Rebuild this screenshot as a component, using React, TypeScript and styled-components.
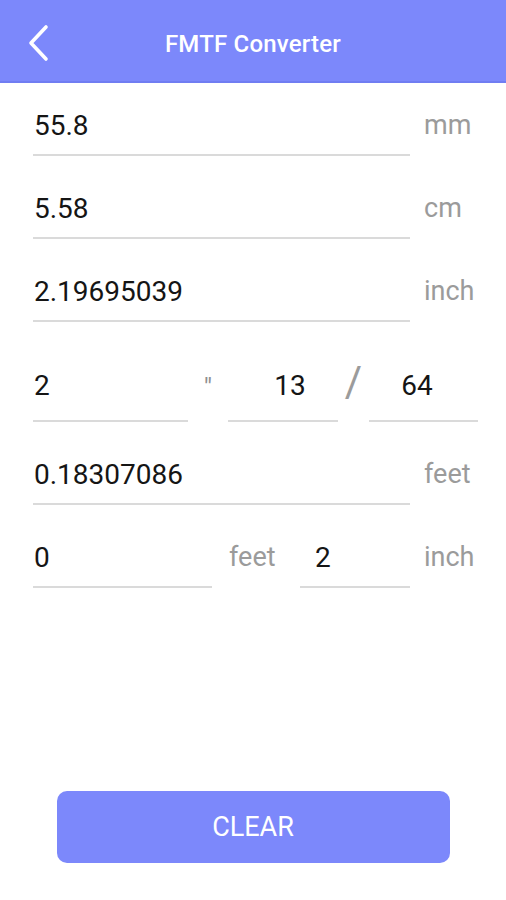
import styled, { createGlobalStyle } from 'styled-components';

const GlobalStyle = createGlobalStyle`
  html, body {
    margin: 0;
    padding: 0;
    background: #ffffff;
  }
  * {
    box-sizing: border-box;
  }
`;

const App = () => {
    return (
        <Page>
            <GlobalStyle />
            <TopBar>
                <BackButton aria-label="back">
                    <svg width="24" height="40" viewBox="0 0 24 40">
                        <path d="M19 4 L4 20 L19 36" fill="none" stroke="#ffffff" strokeWidth="3.6" strokeLinecap="round" strokeLinejoin="round" />
                    </svg>
                </BackButton>
                <Title>FMTF Converter</Title>
            </TopBar>

            <Form>
                <Row>
                    <Field readOnly value="55.8" />
                    <Unit>mm</Unit>
                </Row>
                <Row>
                    <Field readOnly value="5.58" />
                    <Unit>cm</Unit>
                </Row>
                <Row>
                    <Field readOnly value="2.19695039" />
                    <Unit>inch</Unit>
                </Row>
                <Row $tall>
                    <Field readOnly value="2" $width={155} $tall />
                    <Sep $width={40}><Quote>″</Quote></Sep>
                    <Field readOnly value="13" $width={110} $tall $center $padLeft={14} />
                    <Sep $width={31}><Slash>/</Slash></Sep>
                    <Field readOnly value="64" $width={109} $tall $center $padRight={14} />
                </Row>
                <Row>
                    <Field readOnly value="0.18307086" />
                    <Unit>feet</Unit>
                </Row>
                <Row>
                    <Field readOnly value="0" $width={179} />
                    <InlineUnit>feet</InlineUnit>
                    <Field readOnly value="2" $width={110} $padLeft={15} />
                    <Unit>inch</Unit>
                </Row>
            </Form>

            <Footer>
                <ClearButton>CLEAR</ClearButton>
            </Footer>
        </Page>
    );
};

export default App;

// Styled Components
const Page = styled.div`
  height: 900px;
  display: flex;
  flex-direction: column;
  font-family: Roboto, "Noto Sans", Arial, sans-serif;
  background: #ffffff;
`;

const TopBar = styled.header`
  height: 83px;
  flex-shrink: 0;
  background: #7c88fb;
  border-bottom: 2px solid #707df2;
  display: flex;
  align-items: center;
  justify-content: center;
  position: relative;
`;

const BackButton = styled.div`
  position: absolute;
  left: 27px;
  top: 23px;
  display: flex;
`;

const Title = styled.h1`
  margin: 6px 0 0;
  color: #ffffff;
  font-size: 24px;
  font-weight: 500;
  letter-spacing: 0.2px;
`;

const Form = styled.div`
  display: flex;
  flex-direction: column;
  gap: 23px;
  padding-top: 13px;
`;

const Row = styled.div<{ $tall?: boolean }>`
  display: flex;
  align-items: flex-end;
  padding: 0 14px 0 33px;
  margin-top: ${(p) => (p.$tall ? '5px' : '0')};
`;

const Field = styled.input<{
    $width?: number;
    $tall?: boolean;
    $center?: boolean;
    $padLeft?: number;
    $padRight?: number;
}>`
  flex: ${(p) => (p.$width ? `0 0 ${p.$width}px` : '1 1 auto')};
  width: ${(p) => (p.$width ? `${p.$width}px` : 'auto')};
  min-width: 0;
  height: ${(p) => (p.$tall ? '72px' : '60px')};
  border: none;
  border-bottom: 2px solid #dadada;
  outline: none;
  background: transparent;
  padding: 0 ${(p) => p.$padRight ?? 0}px 0 ${(p) => p.$padLeft ?? 1}px;
  font-family: Roboto, "Noto Sans", Arial, sans-serif;
  font-size: 28px;
  color: #151515;
  text-align: ${(p) => (p.$center ? 'center' : 'left')};
`;

const Unit = styled.div`
  flex: 0 0 68px;
  margin-left: 14px;
  height: 60px;
  padding-bottom: 2px;
  display: flex;
  align-items: center;
  font-size: 27px;
  color: #9b9b9b;
`;

const InlineUnit = styled.div`
  flex: 0 0 88px;
  height: 60px;
  padding: 0 0 2px 17px;
  display: flex;
  align-items: center;
  font-size: 27px;
  color: #9b9b9b;
`;

const Sep = styled.div<{ $width: number }>`
  flex: 0 0 ${(p) => p.$width}px;
  height: 72px;
  padding-bottom: 2px;
  display: flex;
  align-items: center;
  justify-content: center;
  color: #9b9b9b;
`;

const Quote = styled.span`
  font-size: 26px;
  margin-top: 4px;
  color: #8f8f8f;
`;

const Slash = styled.span`
  font-size: 42px;
  font-weight: 400;
  margin-top: -8px;
`;

const Footer = styled.div`
  margin-top: auto;
  padding-bottom: 37px;
  display: flex;
  justify-content: center;
`;

const ClearButton = styled.button`
  width: 393px;
  height: 72px;
  border: none;
  border-radius: 10px;
  background: #7c88fb;
  color: #ffffff;
  font-family: Roboto, "Noto Sans", Arial, sans-serif;
  font-size: 27px;
  font-weight: 400;
  cursor: pointer;
`;
